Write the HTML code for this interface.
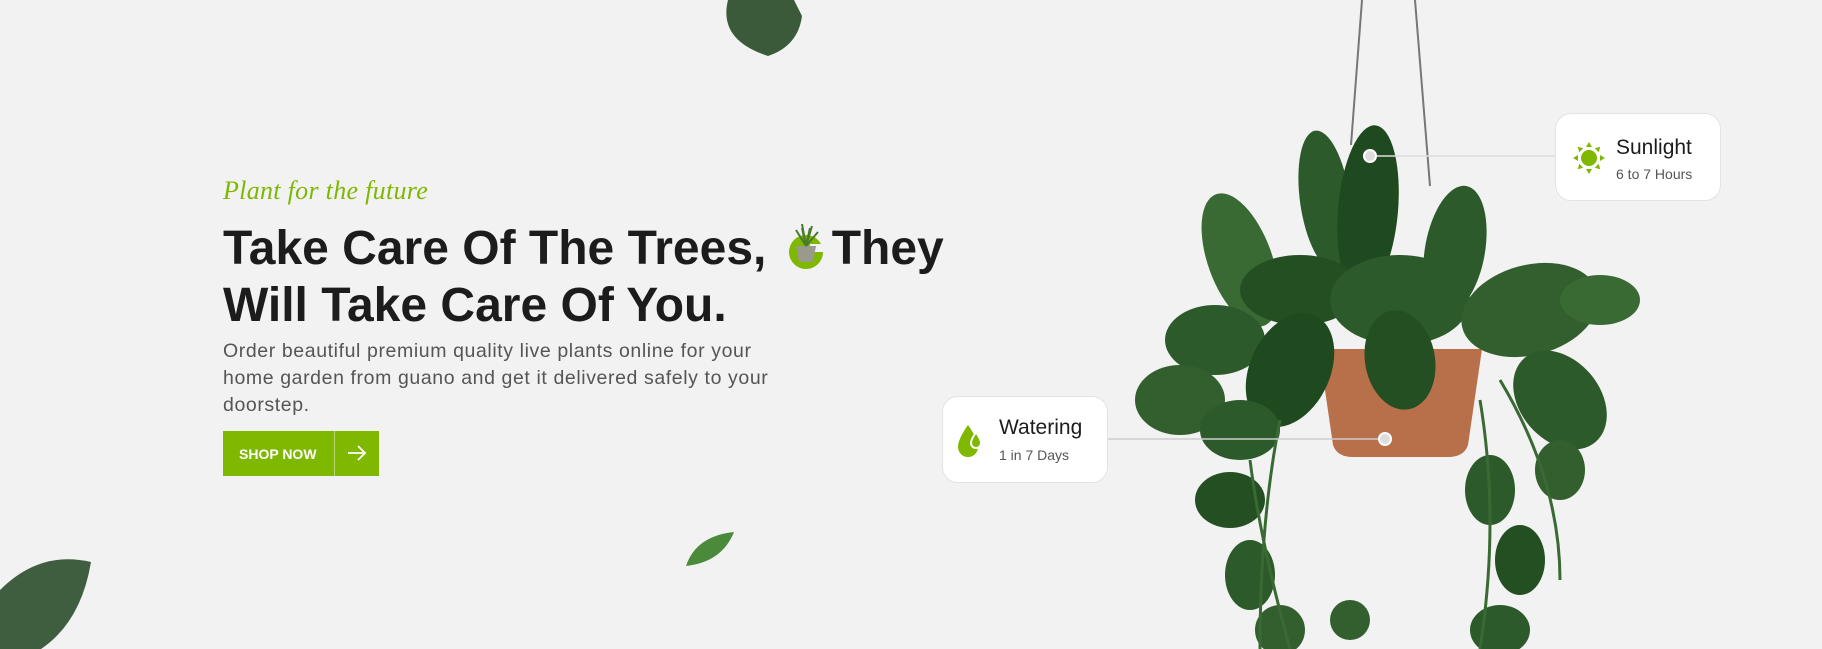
<!DOCTYPE html>
<html><head><meta charset="utf-8"><style>
*{margin:0;padding:0;box-sizing:border-box}
body{width:1822px;height:649px;background:#f2f2f2;font-family:"Liberation Sans",sans-serif;position:relative;overflow:hidden}
.tag{position:absolute;left:223px;top:176px;color:#7fb800;font:italic 26px "Liberation Serif",serif;letter-spacing:0.3px}
h1{position:absolute;left:223px;top:220px;font-size:48px;line-height:57px;color:#1c1c1c;font-weight:700;width:780px;letter-spacing:0}
.ico{display:inline-block;width:48px;height:48px;vertical-align:-6px;margin:0 2px}
p{position:absolute;left:223px;top:338px;width:640px;font-size:19.5px;line-height:27px;color:#555;letter-spacing:0.6px}
.btn{position:absolute;left:223px;top:431px;width:156px;height:45px;background:#7fb800;color:#fff;font-size:14px;font-weight:700}
.btn span{position:absolute;left:16px;top:15px}
.btn i{position:absolute;left:111px;top:0;width:1px;height:45px;background:rgba(255,255,255,.45)}
.card{position:absolute;background:#fff;border:1px solid #e3e3e3;border-radius:16px}
.card b{position:absolute;font-weight:400;font-size:21px;color:#1c1c1c}
.card small{position:absolute;font-size:14px;color:#555}
</style></head><body>
<div class="tag">Plant for the future</div>
<h1>Take Care Of The Trees, <svg class="ico" viewBox="0 0 48 48"><circle cx="24" cy="30" r="17" fill="#7fb800"/><rect x="28" y="22" width="20" height="8" fill="#f2f2f2"/><path d="M14 24h20l-3 16H17z" fill="#9a9a8a"/><g stroke="#4a7a30" stroke-width="2" fill="none"><path d="M24 24L20 2M24 24l6-20M24 24l-10-16M24 24l12-14M24 24l-4-18M24 24L28 6"/></g></svg>They<br>Will Take Care Of You.</h1>
<p>Order beautiful premium quality live plants online for your<br>home garden from guano and get it delivered safely to your<br>doorstep.</p>
<div class="btn"><span>SHOP NOW</span><i></i><svg style="position:absolute;left:123px;top:13px" width="22" height="18" viewBox="0 0 22 18"><path d="M2 9h17M12 2l7 7-7 7" stroke="#fff" stroke-width="1.8" fill="none"/></svg></div>

<svg style="position:absolute;left:0;top:0" width="1822" height="649">
<line x1="1362" y1="0" x2="1351" y2="145" stroke="#777" stroke-width="2"/>
<line x1="1415" y1="0" x2="1430" y2="186" stroke="#777" stroke-width="2"/>
<path d="M1319 349h163l-14 96q-4 12-20 12h-95q-16 0-20-12z" fill="#b8704a"/>
<g fill="#2d5a2a">
<ellipse cx="1325" cy="200" rx="25" ry="70" transform="rotate(-8 1325 200)"/>
<ellipse cx="1368" cy="210" rx="30" ry="85" transform="rotate(5 1368 210)" fill="#1f4a20"/>
<ellipse cx="1455" cy="250" rx="30" ry="65" transform="rotate(10 1455 250)"/>
<ellipse cx="1240" cy="260" rx="32" ry="70" transform="rotate(-20 1240 260)" fill="#3a6a34"/>
<ellipse cx="1300" cy="290" rx="60" ry="35" fill="#244f23"/>
<ellipse cx="1400" cy="300" rx="70" ry="45" fill="#2d5a2a"/>
<ellipse cx="1530" cy="310" rx="70" ry="45" transform="rotate(-15 1530 310)" fill="#335f2e"/>
<ellipse cx="1600" cy="300" rx="40" ry="25" fill="#3a6a34"/>
<ellipse cx="1215" cy="340" rx="50" ry="35" fill="#2d5a2a"/>
<ellipse cx="1290" cy="370" rx="40" ry="60" transform="rotate(25 1290 370)" fill="#1f4a20"/>
<ellipse cx="1400" cy="360" rx="35" ry="50" transform="rotate(-10 1400 360)" fill="#244f23"/>
<ellipse cx="1560" cy="400" rx="40" ry="55" transform="rotate(-40 1560 400)" fill="#2d5a2a"/>
<ellipse cx="1180" cy="400" rx="45" ry="35" fill="#335f2e"/>
<ellipse cx="1240" cy="430" rx="40" ry="30" fill="#2d5a2a"/>
<ellipse cx="1230" cy="500" rx="35" ry="28" fill="#244f23"/>
<ellipse cx="1250" cy="575" rx="25" ry="35" fill="#2d5a2a"/>
<ellipse cx="1280" cy="630" rx="25" ry="25" fill="#335f2e"/>
<ellipse cx="1490" cy="490" rx="25" ry="35" fill="#2d5a2a"/>
<ellipse cx="1520" cy="560" rx="25" ry="35" fill="#244f23"/>
<ellipse cx="1560" cy="470" rx="25" ry="30" fill="#335f2e"/>
<ellipse cx="1500" cy="630" rx="30" ry="25" fill="#2d5a2a"/>
<ellipse cx="1350" cy="620" rx="20" ry="20" fill="#335f2e"/>
</g>
<g stroke="#3a6a34" stroke-width="3" fill="none">
<path d="M1280 420q-20 100 -20 229M1480 400q20 120 0 249M1500 380q60 100 60 200M1250 460q10 80 40 189"/>
</g>
<line x1="1370" y1="156" x2="1555" y2="156" stroke="#ddd" stroke-width="1.5"/>
<line x1="1107" y1="439" x2="1385" y2="439" stroke="#ccc" stroke-width="1.5"/>
<circle cx="1370" cy="156" r="6" fill="#ddd" stroke="#fff" stroke-width="2"/>
<circle cx="1385" cy="439" r="6" fill="#ddd" stroke="#fff" stroke-width="2"/>
<path d="M728 0q-10 40 40 56q30 -10 34 -40l-8 -16z" fill="#3a5a3a"/>
<path d="M0 590q40 -40 91 -28q-10 60 -50 87h-41z" fill="#3f5e3f"/>
<path d="M686 566q10 -30 48 -34q-12 30 -48 34z" fill="#4a8a3a"/>
</svg>

<div class="card" style="left:1555px;top:113px;width:166px;height:88px">
<svg style="position:absolute;left:17px;top:28px" width="32" height="32" viewBox="0 0 32 32"><circle cx="16" cy="16" r="8" fill="#7fb800"/><g fill="#7fb800"><path d="M16 0l3 5h-6zM16 32l3-5h-6zM0 16l5 3v-6zM32 16l-5 3v-6zM4.7 4.7l5.5 1.6-3.9 3.9zM27.3 27.3l-5.5-1.6 3.9-3.9zM27.3 4.7l-1.6 5.5-3.9-3.9zM4.7 27.3l1.6-5.5 3.9 3.9z"/></g></svg>
<b style="left:60px;top:22px">Sunlight</b><small style="left:60px;top:52px">6 to 7 Hours</small></div>
<div class="card" style="left:942px;top:396px;width:166px;height:87px">
<svg style="position:absolute;left:14px;top:26px" width="28" height="34" viewBox="0 0 28 34"><path d="M11 2q-10 14 -10 22a10 10 0 0 0 20 0q0-8-10-22z" fill="#7fb800"/><path d="M19 8q-6 8-6 12a6 6 0 0 0 12 0q0-4-6-12z" fill="#fff"/><path d="M19 11q-4 6-4 9a4 4 0 0 0 8 0q0-3-4-9z" fill="#7fb800"/></svg>
<b style="left:56px;top:19px">Watering</b><small style="left:56px;top:50px">1 in 7 Days</small></div>
</body></html>
